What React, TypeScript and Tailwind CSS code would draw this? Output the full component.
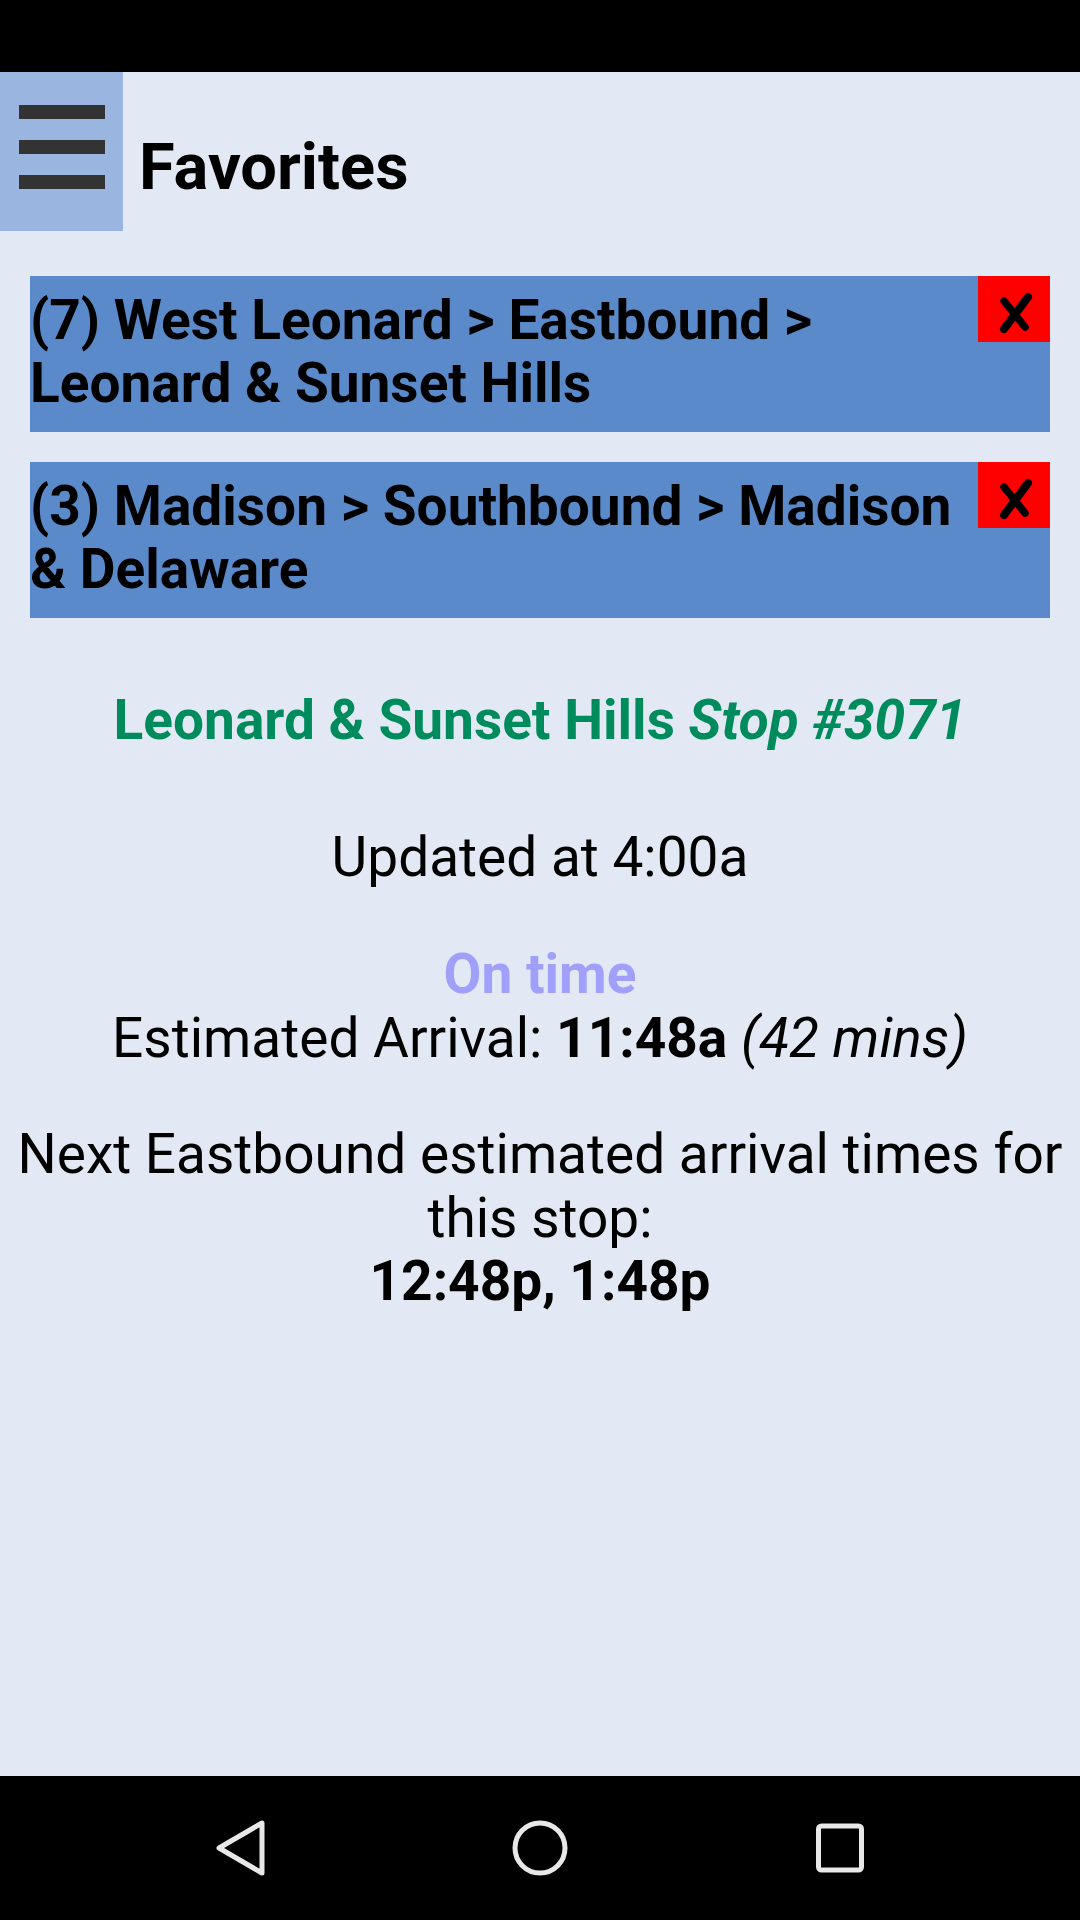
import React from "react";

const favorites = [
  { id: 7, text: "(7) West Leonard > Eastbound > Leonard & Sunset Hills" },
  { id: 3, text: "(3) Madison > Southbound > Madison & Delaware" },
];

function RemoveMark() {
  return (
    <svg width="72" height="66" viewBox="0 0 72 66">
      <path d="M50 21 L26 53" stroke="#000" strokeWidth="8" strokeLinecap="round" fill="none" />
      <path d="M26 25 L47 51" stroke="#000" strokeWidth="7.5" strokeLinecap="round" fill="none" />
    </svg>
  );
}

export default function App() {
  return (
    <div className="flex flex-col h-[1920px] w-[1080px] bg-[#e2e9f4] font-['Roboto',sans-serif] text-black overflow-hidden">
      {/* status bar */}
      <div className="h-[72px] shrink-0 bg-black" />

      {/* header */}
      <div className="flex h-[159px] shrink-0 items-start">
        <button className="flex h-full w-[123px] flex-col items-center justify-start gap-[21px] bg-[#9ab5df] pt-[33px]">
          <span className="block h-[14px] w-[86px] bg-[#333333]" />
          <span className="block h-[14px] w-[86px] bg-[#333333]" />
          <span className="block h-[14px] w-[86px] bg-[#333333]" />
        </button>
        <h1 className="ml-[16px] mt-[57px] text-[65px] font-bold leading-[76px]">Favorites</h1>
      </div>

      {/* content */}
      <div className="flex flex-1 flex-col">
        <div className="mx-[30px] mt-[45px] flex flex-col gap-[30px]">
          {favorites.map((f) => (
            <div key={f.id} className="flex items-start bg-[#5b8acb]">
              <div className="flex-1 pt-[13px] pb-[17px] text-[55px] font-bold leading-[63px]">{f.text}</div>
              <div className="h-[66px] w-[72px] shrink-0 bg-[#ff0000]">
                <RemoveMark />
              </div>
            </div>
          ))}
        </div>

        <div className="px-[6px] text-center text-[55px] leading-[63.5px]">
          <h2 className="mt-[71px] font-bold text-[#008b5d]">
            Leonard &amp; Sunset Hills <em className="italic">Stop #3071</em>
          </h2>
          <p className="mt-[73px]">Updated at 4:00a</p>
          <div className="mt-[54px]">
            <div className="font-bold text-[#a0a0fa]">On time</div>
            <div>
              Estimated Arrival: <b className="font-bold">11:48a</b> <i className="italic">(42 mins)</i>
            </div>
          </div>
          <p className="mt-[53px]">
            Next Eastbound estimated arrival times for this stop:
            <br />
            <b className="font-bold">12:48p, 1:48p</b>
          </p>
        </div>
      </div>

      {/* nav bar */}
      <div className="flex h-[144px] shrink-0 items-center justify-center bg-black">
        <div className="flex w-[300px] justify-center">
          <svg width="60" height="60" viewBox="0 0 60 60">
            <path d="M52 5 L52 55 L9 30 Z" fill="none" stroke="#e8e8e8" strokeWidth="5" strokeLinejoin="round" />
          </svg>
        </div>
        <div className="flex w-[300px] justify-center">
          <svg width="60" height="60" viewBox="0 0 60 60">
            <circle cx="30" cy="30" r="25" fill="none" stroke="#e8e8e8" strokeWidth="5" />
          </svg>
        </div>
        <div className="flex w-[300px] justify-center">
          <svg width="60" height="60" viewBox="0 0 60 60">
            <rect x="8.5" y="8" width="43" height="44" rx="3" fill="none" stroke="#e8e8e8" strokeWidth="5" />
          </svg>
        </div>
      </div>
    </div>
  );
}
